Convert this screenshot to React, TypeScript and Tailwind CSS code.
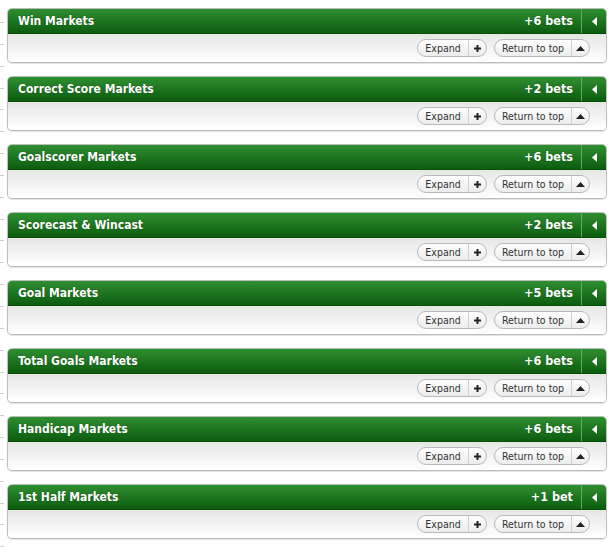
const markets = [
  { name: 'Win Markets', bets: '+6 bets' },
  { name: 'Correct Score Markets', bets: '+2 bets' },
  { name: 'Goalscorer Markets', bets: '+6 bets' },
  { name: 'Scorecast & Wincast', bets: '+2 bets' },
  { name: 'Goal Markets', bets: '+5 bets' },
  { name: 'Total Goals Markets', bets: '+6 bets' },
  { name: 'Handicap Markets', bets: '+6 bets' },
  { name: '1st Half Markets', bets: '+1 bet' },
]

const font = "font-['DejaVu_Sans_Condensed','DejaVu_Sans',sans-serif]"

function PillButton({ label, icon, width }: { label: string; icon: 'plus' | 'up'; width: string }) {
  return (
    <button
      type="button"
      className={`${width} h-[18px] flex items-stretch rounded-full border border-[#b9b9b9] bg-gradient-to-b from-white to-[#ececec] text-[10.5px] text-[#333] leading-none`}
    >
      <span className="flex-1 flex items-center justify-center">{label}</span>
      <span className="w-[18px] flex items-center justify-center border-l border-[#d0d0d0]">
        {icon === 'plus' ? (
          <svg width="7" height="7" viewBox="0 0 7 7"><path d="M2.5 0h2v2.5H7v2H4.5V7h-2V4.5H0v-2h2.5z" fill="#222" /></svg>
        ) : (
          <svg width="9" height="5" viewBox="0 0 9 5"><path d="M4.5 0L9 5H0z" fill="#222" /></svg>
        )}
      </span>
    </button>
  )
}

function MarketBox({ name, bets }: { name: string; bets: string }) {
  return (
    <div className="w-[600px] rounded-[5px] border border-[#bdbdbd] shadow-[0_1px_1px_rgba(0,0,0,0.12)] overflow-hidden bg-white">
      {/* 헤더 */}
      <div className="h-[25px] flex items-stretch bg-gradient-to-b from-[#2f8f31] to-[#0b5d0d] border-b border-[#0a4f0a]">
        <div className="flex-1 flex items-center pl-[10px] text-white font-bold text-[12px] [text-shadow:0_0_1px_rgba(0,40,0,0.6)]">
          {name}
        </div>
        <div className="flex items-center pr-[8px] text-white font-bold text-[12.5px] [text-shadow:0_0_1px_rgba(0,40,0,0.6)]">
          {bets}
        </div>
        <div className="w-[25px] flex items-center justify-center border-l border-[#5fae5f]">
          <svg width="5" height="9" viewBox="0 0 5 9"><path d="M5 0v9L0 4.5z" fill="#fff" /></svg>
        </div>
      </div>
      {/* 본문 */}
      <div className="h-[28px] flex items-start justify-end gap-[7px] pt-[5px] pr-[16px] bg-gradient-to-b from-[#e6e6e6] to-white">
        <PillButton label="Expand" icon="plus" width="w-[70px]" />
        <PillButton label="Return to top" icon="up" width="w-[96px]" />
      </div>
    </div>
  )
}

export default function App() {
  return (
    <div className={`w-[613px] h-[547px] bg-white flex overflow-hidden ${font}`}>
      {/* 왼쪽 눈금 */}
      <div className="w-[7px] flex flex-col gap-[21px] pt-[22px]">
        {Array.from({ length: 25 }).map((_, i) => (
          <div key={i} className="w-[4px] h-px bg-[#cfcfcf]" />
        ))}
      </div>
      <div className="flex flex-col gap-[13px] pt-[8px]">
        {markets.map(m => (
          <MarketBox key={m.name} name={m.name} bets={m.bets} />
        ))}
      </div>
    </div>
  )
}
